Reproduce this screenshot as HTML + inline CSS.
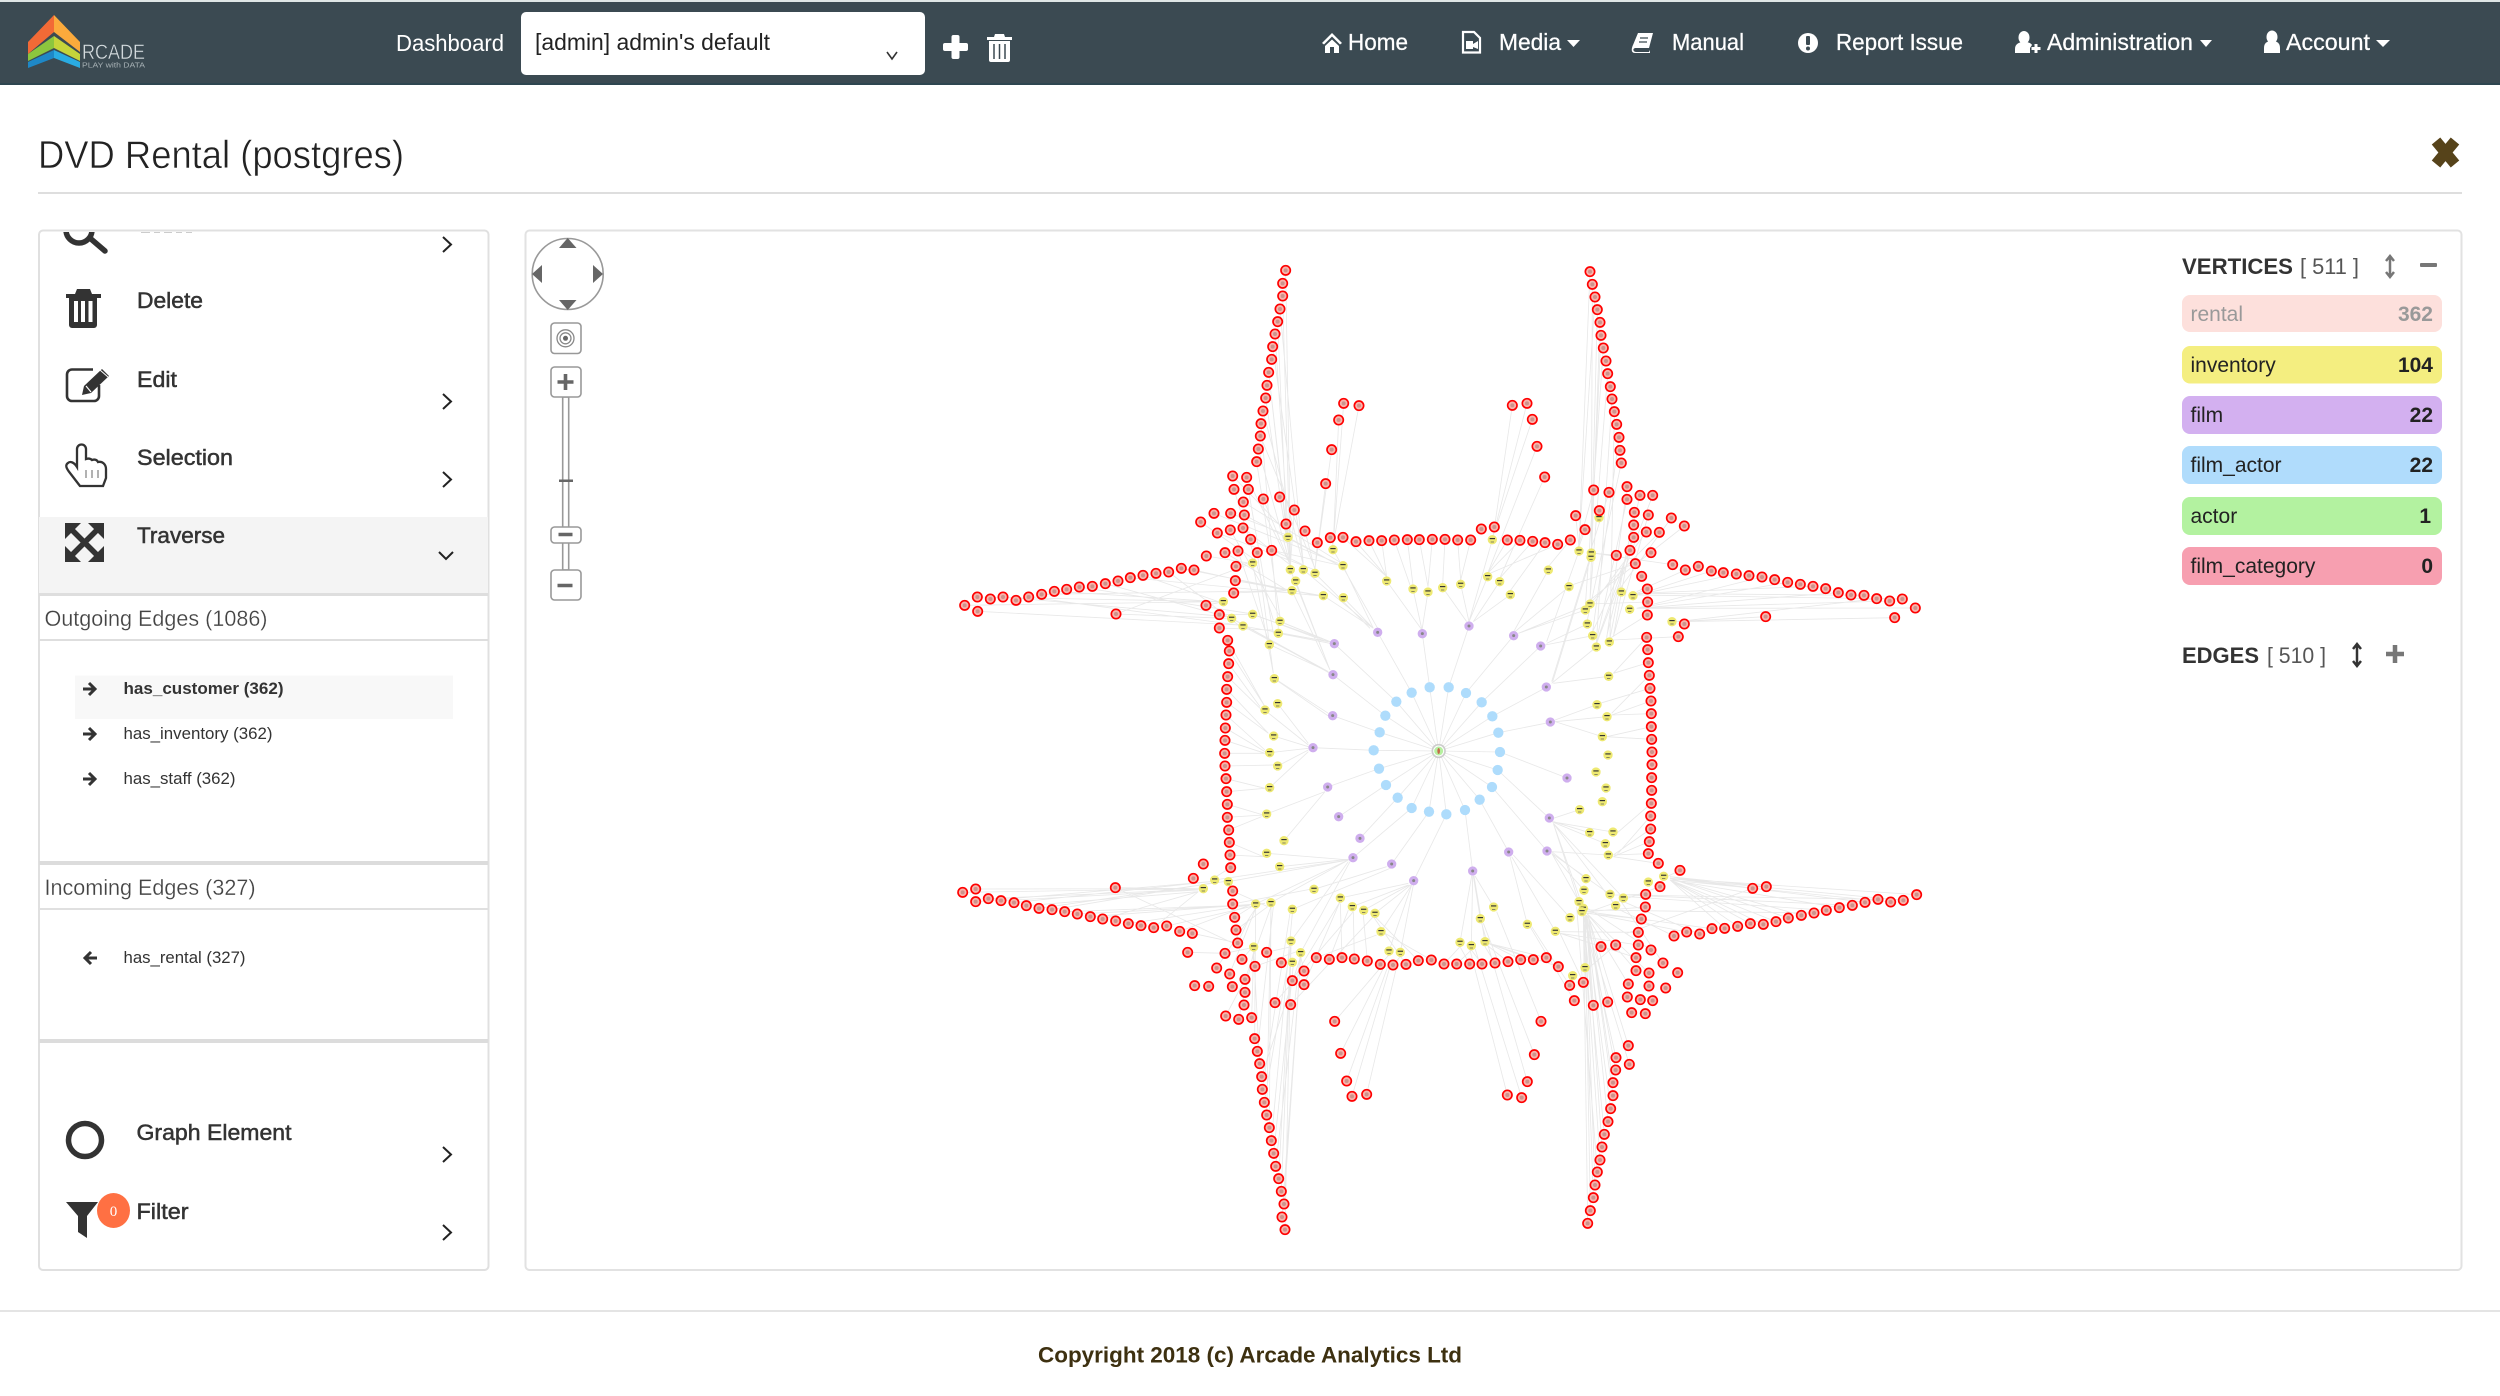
<!DOCTYPE html>
<html lang="en"><head><meta charset="utf-8"><title>DVD Rental (postgres)</title>
<style>
html,body{margin:0;padding:0;background:#fff}
svg{display:block}
text{font-family:"Liberation Sans",sans-serif}
.n{fill:none;stroke:none}
.R{marker-start:url(#R);marker-mid:url(#R);marker-end:url(#R)}
.Y{marker-start:url(#Y);marker-mid:url(#Y);marker-end:url(#Y)}
.P{marker-start:url(#P);marker-mid:url(#P);marker-end:url(#P)}
.B{marker-start:url(#B);marker-mid:url(#B);marker-end:url(#B)}
.e{fill:none;stroke:#e8e8e8;stroke-width:2.5}
.m{fill:#333;stroke:#333;stroke-width:.5;font-size:22px}
.w{fill:#fff;font-size:23px}
.s{fill:#333;font-size:17px}
.l{fill:#222;font-size:21px}
.c{fill:none;stroke:#222;stroke-width:2}
</style></head>
<body>
<svg xmlns="http://www.w3.org/2000/svg" width="2500" height="1396" viewBox="0 0 2500 1396">
<defs>
<marker id="R" markerUnits="userSpaceOnUse" markerWidth="60" markerHeight="60" refX="0" refY="0" viewBox="-30 -30 60 60"><circle r="14" fill="#f7b4ac" stroke="#f00" stroke-width="5"/><circle r="6" fill="#a5706a" opacity=".5"/></marker>
<marker id="Y" markerUnits="userSpaceOnUse" markerWidth="60" markerHeight="60" refX="0" refY="0" viewBox="-30 -30 60 60"><circle r="14" fill="#eee972"/><rect x="-8" y="-5" width="16" height="3.500" fill="#333"/><rect x="-5" y="6" width="10" height="2" fill="#555"/></marker>
<marker id="P" markerUnits="userSpaceOnUse" markerWidth="60" markerHeight="60" refX="0" refY="0" viewBox="-30 -30 60 60"><circle r="14" fill="#cfaeee"/><circle r="4.5" fill="#888"/></marker>
<marker id="B" markerUnits="userSpaceOnUse" markerWidth="60" markerHeight="60" refX="0" refY="0" viewBox="-30 -30 60 60"><circle r="15.5" fill="#aedcfc"/></marker>
<clipPath id="pc"><rect x="39" y="232" width="449" height="1037"/></clipPath>
</defs>

<!-- navbar -->
<rect x="0" y="0" width="2500" height="3" fill="#dfe6e6"/>
<rect x="0" y="2" width="2500" height="82" fill="#3b4a52"/>
<rect x="0" y="83" width="2500" height="2" fill="#2e4650"/>
<polygon points="54,15 28,42 28,54 54,32" fill="#f26a36"/>
<polygon points="54,15 80,42 80,52 54,32" fill="#fbaa3c"/>
<polygon points="54,36 28,54 28,61 54,48" fill="#8cc63e"/>
<polygon points="54,36 80,54 80,61 54,48" fill="#c6d43a"/>
<polygon points="54,50 28,62 28,68 54,58" fill="#1e88c7"/>
<polygon points="54,50 80,62 80,68 54,58" fill="#2aace2"/>
<text x="82" y="59" font-size="21" fill="#d5dcdf" stroke="#3b4a52" stroke-width=".4" textLength="63" lengthAdjust="spacingAndGlyphs">RCADE</text>
<text x="82" y="67.500" font-size="7" fill="#a8b2b6" textLength="63" lengthAdjust="spacingAndGlyphs">PLAY with DATA</text>
<text class="w" x="396" y="51" textLength="108" lengthAdjust="spacingAndGlyphs">Dashboard</text>
<rect x="521" y="12" width="404" height="63" rx="5" fill="#fff"/>
<text x="535" y="50" font-size="23" fill="#222" textLength="235" lengthAdjust="spacingAndGlyphs">[admin] admin's default</text>
<path d="M887 52L892 59L897 52" fill="none" stroke="#333" stroke-width="1.6"/>
<rect x="951.500" y="35" width="8" height="24" rx="2" fill="#fff"/><rect x="943" y="43" width="25" height="8" rx="2" fill="#fff"/>
<path d="M987 37h25v3h-25zM994 37l1-3h9l1 3zM989 41h21v19a2 2 0 0 1-2 2h-17a2 2 0 0 1-2-2z" fill="#fff"/>
<path d="M994 44v15M999.500 44v15M1005 44v15" stroke="#3b4a52" stroke-width="1.500"/>

<path d="M1332 33L1322 43l2 1.500 8-8 8 8 2-1.500zM1325 46l7-6.500 7 6.500v7h-5v-6h-4v6h-5z" fill="#fff"/>
<text class="w" x="1348" y="50" stroke="#fff" stroke-width=".25" textLength="60" lengthAdjust="spacingAndGlyphs">Home</text>
<path d="M1463 32H1474L1480 38V52.500H1463Z" fill="none" stroke="#fff" stroke-width="2.200"/>
<rect x="1466" y="41" width="7" height="8" fill="#fff"/><polygon points="1473,44 1478,41 1478,49 1473,47" fill="#fff"/>
<text class="w" x="1499" y="50" stroke="#fff" stroke-width=".25" textLength="62" lengthAdjust="spacingAndGlyphs">Media</text>
<polygon points="1567,40 1580,40 1573.500,47" fill="#fff"/>
<path d="M1638 33H1653L1649 48H1636C1632 48 1633 52 1636 52H1649L1650 50V53H1635C1630 53 1632 47 1633 45Z" fill="#fff"/>
<path d="M1640 38h8M1639 42h8" stroke="#3b4a52" stroke-width="1.300"/>
<text class="w" x="1672" y="50" stroke="#fff" stroke-width=".25" textLength="72" lengthAdjust="spacingAndGlyphs">Manual</text>
<circle cx="1808" cy="43" r="10" fill="#fff"/><rect x="1806" y="36" width="4" height="9" rx="1" fill="#3b4a52"/><circle cx="1808" cy="48.500" r="2" fill="#3b4a52"/>
<text class="w" x="1836" y="50" stroke="#fff" stroke-width=".25" textLength="127" lengthAdjust="spacingAndGlyphs">Report Issue</text>
<ellipse cx="2024" cy="37.500" rx="5.500" ry="6.500" fill="#fff"/><path d="M2015 53v-4c0-5 4-7 9-7 4 0 7 1 8 3l-2 3v5z" fill="#fff"/><path d="M2036 44v9M2031.500 48.500h9" stroke="#fff" stroke-width="3"/>
<text class="w" x="2047" y="50" stroke="#fff" stroke-width=".25" textLength="146" lengthAdjust="spacingAndGlyphs">Administration</text>
<polygon points="2200,40 2212,40 2206,47" fill="#fff"/>
<ellipse cx="2272" cy="37" rx="5.500" ry="6.500" fill="#fff"/><path d="M2264 53v-5c0-5 3-7 8-7s8 2 8 7v5z" fill="#fff"/>
<text class="w" x="2286" y="50" stroke="#fff" stroke-width=".25" textLength="84" lengthAdjust="spacingAndGlyphs">Account</text>
<polygon points="2376,40 2390,40 2383,47" fill="#fff"/>

<!-- header -->
<text x="38" y="168" font-size="39" fill="#222" stroke="#fff" stroke-width=".55" textLength="366" lengthAdjust="spacingAndGlyphs">DVD Rental (postgres)</text>
<rect x="38" y="192" width="2424" height="2" fill="#dedede"/>
<path d="M2436 141L2455 164M2455 141L2436 164" stroke="#56431a" stroke-width="11"/>

<!-- left panel -->
<rect x="39" y="230.500" width="449.500" height="1039.500" rx="4" fill="#fff" stroke="#e0e0e0" stroke-width="2"/>
<g clip-path="url(#pc)">
<circle cx="79" cy="230" r="13" fill="none" stroke="#333" stroke-width="5.500"/>
<path d="M91 239L105 251" stroke="#333" stroke-width="5.500" stroke-linecap="round"/>
<path d="M141 232h9M154 232h6M164 232h8M176 232h6M186 232h6" stroke="#ccc" stroke-width="2"/>
<rect x="39" y="517" width="449" height="76" fill="#f4f4f4"/>
</g>
<path class="c" d="M443 237L451 244.500L443 252"/>
<path d="M66 294h35v4h-35zM75 294l2-5h13l2 5zM69 296h28v29a3 3 0 0 1-3 3h-22a3 3 0 0 1-3-3z" fill="#333"/>
<path d="M76 301v21M83 301v21M90.500 301v21" stroke="#fff" stroke-width="4"/>
<text class="m" x="137" y="308" textLength="66" lengthAdjust="spacingAndGlyphs">Delete</text>
<path d="M93 369.500H72a5 5 0 0 0-5 5V396a5 5 0 0 0 5 5H94a5 5 0 0 0 5-5V385" fill="none" stroke="#333" stroke-width="2.600"/>
<polygon points="82,395 84,386 102,369 109,376 91,393" fill="#333"/><path d="M86 386l5 6" stroke="#fff" stroke-width="1.200"/><path d="M100 370l8 7" stroke="#fff" stroke-width="1"/>
<text class="m" x="137" y="387" textLength="40" lengthAdjust="spacingAndGlyphs">Edit</text>
<path class="c" d="M443 394L451 401.500L443 409"/>
<path d="M80 486L70 473C66 468 65 465 68 463C70 461 74 462 77 467V449a4.500 4.500 0 0 1 9 0V459C89 458 91 459 92 460C95 459 97 460 98 462C102 461 106 464 106 469V478L103 486Z" fill="none" stroke="#333" stroke-width="2.300"/>
<path d="M86 470v8M92 470v8M98 470v8" stroke="#888" stroke-width="1.300"/>
<text class="m" x="137" y="465" textLength="96" lengthAdjust="spacingAndGlyphs">Selection</text>
<path class="c" d="M443 472L451 479.500L443 487"/>
<path d="M72 530L97 555M97 530L72 555" stroke="#333" stroke-width="5.500"/>
<path d="M65 523H81L65 539ZM104 523H88L104 539ZM65 562H81L65 546ZM104 562H88L104 546Z" fill="#333"/>
<text class="m" x="137" y="543" textLength="88" lengthAdjust="spacingAndGlyphs">Traverse</text>
<path class="c" d="M439 552L446 559L453 552"/>
<rect x="39" y="593" width="449" height="3" fill="#dedede"/>
<text x="44.500" y="626" font-size="22" fill="#444" stroke="#fff" stroke-width=".25" textLength="223" lengthAdjust="spacingAndGlyphs">Outgoing Edges (1086)</text>
<rect x="39" y="639" width="449" height="2" fill="#dedede"/>
<rect x="75" y="675.500" width="378" height="43.500" fill="#f8f8f8"/>
<path d="M83 689h11M89 683l6 6-6 6M83 734h11M89 728l6 6-6 6M83 779h11M89 773l6 6-6 6" fill="none" stroke="#333" stroke-width="3"/>
<text class="s" x="123.500" y="694" font-weight="bold" textLength="160" lengthAdjust="spacingAndGlyphs">has_customer (362)</text>
<text class="s" x="123.500" y="739" textLength="149" lengthAdjust="spacingAndGlyphs">has_inventory (362)</text>
<text class="s" x="123.500" y="784" textLength="112" lengthAdjust="spacingAndGlyphs">has_staff (362)</text>
<rect x="39" y="861" width="449" height="4" fill="#dcdcdc"/>
<text x="44.500" y="895" font-size="22" fill="#444" stroke="#fff" stroke-width=".25" textLength="211" lengthAdjust="spacingAndGlyphs">Incoming Edges (327)</text>
<rect x="39" y="908" width="449" height="2" fill="#e0e0e0"/>
<path d="M97 958H85M91 952l-6 6 6 6" fill="none" stroke="#333" stroke-width="3"/>
<text class="s" x="123.500" y="963" textLength="122" lengthAdjust="spacingAndGlyphs">has_rental (327)</text>
<rect x="39" y="1039" width="449" height="4" fill="#dcdcdc"/>
<circle cx="85" cy="1140" r="16.500" fill="none" stroke="#333" stroke-width="5.500"/>
<text class="m" x="136.500" y="1140" textLength="155" lengthAdjust="spacingAndGlyphs">Graph Element</text>
<path class="c" d="M443 1147L451 1154.500L443 1162"/>
<polygon points="66,1202 98,1202 87,1216 87,1238 78,1232 78,1216" fill="#333"/>
<ellipse cx="113.500" cy="1210.500" rx="16.500" ry="17.500" fill="#ff7043"/>
<text x="113.500" y="1216" font-size="15" fill="#fff" text-anchor="middle" style="font-family:'Liberation Serif',serif">0</text>
<text class="m" x="136.500" y="1219" textLength="52" lengthAdjust="spacingAndGlyphs">Filter</text>
<path class="c" d="M443 1225L451 1232.500L443 1240"/>

<!-- graph panel -->
<rect x="525.500" y="230.500" width="1936" height="1039.500" rx="4" fill="#fff" stroke="#e2e2e2" stroke-width="2"/>
<circle cx="567.700" cy="274" r="35.500" fill="#fff" stroke="#999" stroke-width="1.600"/>
<g fill="#666"><polygon points="567.700,238 559,248 576.500,248"/><polygon points="567.700,310 559,300 576.500,300"/><polygon points="532,274 542,265 542,283"/><polygon points="603,274 593,265 593,283"/></g>
<g fill="#fff" stroke="#999" stroke-width="1.600">
<rect x="562.700" y="397" width="6" height="173"/>
<rect x="551" y="323" width="30" height="30.500" rx="3.500"/>
<rect x="551" y="367" width="30" height="30" rx="3.500"/>
<rect x="551" y="527" width="30" height="16" rx="3.500"/>
<rect x="551" y="570" width="30" height="30" rx="3.500"/>
</g>
<rect x="559" y="479.500" width="14" height="2.500" fill="#666"/>
<circle cx="565.500" cy="338.300" r="8.500" fill="none" stroke="#888" stroke-width="1.300"/><circle cx="565.500" cy="338.300" r="5.500" fill="none" stroke="#888" stroke-width="1.300"/><circle cx="565.500" cy="338.300" r="2.500" fill="#666"/>
<path d="M557.500 382h16M565.500 374v16M558.500 534.500h14M557.500 585.500h15" stroke="#666" stroke-width="3.600"/>

<!-- edges -->
<g transform="translate(940 240) scale(.33333)"><path class="e" d="M1037 91L1052 975M1013 245L1040 880M1005 282L1051 975M998 320L1090 975M986 397L1041 880M977 474L1051 975M969 513L1090 975M961 588L1125 985M955 627L1051 975M950 665L1020 1130M963 551L1015 1165M986 397L1050 975M1028 168L1051 975M1020 207L1090 975M74 1096L835 1085M113 1071L835 1085M189 1071L860 1130M266 1071L895 1155M343 1054L835 1085M418 1041L925 1120M496 1031L860 1130M609 1006L835 1085M686 996L895 1155M762 990L1040 1052M724 985L1135 1067M528 1122L938 969M528 1122L860 1135M113 1114L895 1155M305 1063L1040 1052M571 1013L1135 1067M1211 490L1180 910M1257 497L1180 910M1196 540L1180 910M1175 629L1125 985M1157 731L1125 985M1325 902L1340 1010M1363 900L1410 1035M1402 899L1419 1035M1438 899L1464 1040M1477 898L1464 1040M1287 902L1340 1010M1248 905L1340 1010M1179 929L1313 1165M1209 977L1300 1165M1340 1023L1446 1170M1419 1047L1446 1170M1464 1056L1446 1170M1150 1067L1300 1165M1210 1073L1300 1165M1056 1052L1170 1290M1020 1144L1170 1205M1015 1180L1170 1210M1003 1316L1165 1428M1051 989L1170 1290M1090 989L1300 1165M1125 1000L1290 1165M1067 1023L1170 1290M1044 892L1195 975M878 708L1044 880M920 712L1051 975M882 748L1000 1140M925 748L1000 1180M910 786L1205 970M970 777L1051 975M1019 771L1040 880M1063 810L1051 975M822 820L1195 970M872 820L1040 885M913 825L1195 975M782 846L938 955M1038 852L1044 880M832 879L1125 990M871 870L1020 1130M909 864L1051 975M1095 873L1125 990M932 898L1090 975M1132 908L1125 990M1171 893L1179 915M1209 892L1340 1010M799 948L925 969M855 938L1040 1050M894 933L985 1200M952 938L1000 1300M995 931L1195 975M888 979L925 969M886 1022L1135 1065M881 1059L1040 1052M798 1096L850 1085M838 1124L925 1123M838 1164L1000 1170M938 969L1000 1300M938 1123L1160 1205M875 1135L1170 1300M909 1158L1165 1205"/></g>
<g transform="translate(1440 240) scale(.33333)"><path class="e" d="M450 95L417 920M472 209L454 925M483 286L453 940M503 401L450 1080M523 515L510 1195M537 592L458 1175M544 669L442 1140M490 324L436 1098M516 477L469 1210M457 133L454 925M465 171L417 920M480 247L450 1080M217 496L160 885M261 490L160 885M277 538L160 885M291 619L143 1000M314 711L179 1015M15 898L8 1033M53 900L62 1020M92 900L62 1020M202 900L143 1000M240 901L143 1000M278 904L179 1015M315 908L211 1052M353 913L150 1000M391 900L325 980M435 869L417 920M407 827L417 920M529 946L465 940M698 974L465 940M586 971L395 1035M583 817L510 1195M581 855L520 1190M581 892L470 1205M570 931L458 1175M561 778L470 1200M561 740L500 1195M461 750L415 920M507 757L454 925M600 766L500 1190M638 766L470 1210M625 825L520 1190M619 876L460 1090M658 877L440 1100M694 834L540 1045M733 858L450 1080M736 990L590 1055M814 993L590 1065M889 1002L590 1065M966 1011L590 1105M1043 1027L590 1105M1119 1039L590 1060M1195 1058L590 1105M1272 1066L600 1060M1349 1083L590 1105M1426 1104L590 1105M1387 1077L590 1065M977 1130L710 1145M1364 1133L710 1145M1310 1076L710 1145M622 1047L590 1060M623 1086L450 1092M622 1125L510 1195M715 1190L520 1200M620 1192L520 1300M625 1268L520 1300M628 1306L515 1420M630 1345L480 1390M633 1383L515 1425M634 1421L515 1425M634 1460L500 1490M635 1498L500 1490M157 899L87 1145M143 1010L87 1145M179 1025L100 1145M62 1033L87 1145M8 1043L80 1145M211 1064L100 1145M325 990L221 1175M387 1040L225 1175M436 1110L235 1180M450 1092L235 1180M442 1152L320 1210M458 1187L315 1215M469 1221L335 1330M506 1309L340 1330M471 1394L345 1440M501 1430L345 1445M487 1490L345 1445M417 933L320 1205M454 939L335 1325M453 952L338 1325"/></g>
<g transform="translate(940 850) scale(.33333)"><path class="e" d="M68 127L775 116M107 117L775 116M107 155L810 95M183 152L775 120M259 167L775 125M336 179L810 100M412 192L930 165M488 207L775 125M565 221L930 165M641 233L775 125M680 228L975 160M719 244L930 165M757 250L875 275M526 113L775 116M526 113L880 280M145 146L775 118M222 158L810 95M297 175L850 95M374 185L930 165M451 200L975 160M1035 1139L1053 285M1026 1101L1082 320M1016 986L1053 285M1007 949L1080 320M994 872L1057 190M980 795L993 170M973 757L1053 285M959 641L941 305M944 566L947 175M965 680L1082 320M1001 910L1060 345M988 833L993 170M1024 1024L1053 285M1032 1062L1082 320M952 604L1000 170M967 718L1050 190M857 498L915 388M935 503L941 305M896 508L941 305M743 307L855 310M855 310L927 295M906 328L930 300M980 307L1053 290M1024 338L1057 337M945 349L1070 305M1092 363L1082 320M1092 404L1200 155M1057 392L1200 155M1005 458L1240 185M1052 464L1300 200M830 354L947 175M869 372L947 175M915 388L993 170M893 279L930 200M884 202L935 170M888 240L983 170M878 123L983 170M878 162L1110 118M1129 323L1310 255M1168 328L1225 180M1206 323L1201 160M1243 327L1240 185M1282 333L1270 195M1321 343L1347 315M1359 345L1381 320M1398 343L1300 200M1435 332L1305 200M1474 330L1335 250M1184 514L1320 355M1202 610L1335 345M1220 693L1345 345M1236 739L1350 350M1280 733L1370 350M947 162L1225 30M993 158L1225 30M1019 50L1225 28M1122 118L1340 50M1201 144L1405 100M1237 170L1405 105M1271 181L1408 105M1305 190L1412 105M1323 245L1415 105M1053 273L1225 35M1082 308L1230 35M1347 303L1415 105M1381 307L1420 105M1057 178L1350 55M980 10L1230 30"/></g>
<g transform="translate(1440 800) scale(.33333)"><path class="e" d="M443 1270L430 345M451 1232L435 345M460 1193L430 345M465 1155L435 345M472 1116L410 320M480 1080L430 345M486 1041L438 345M493 1003L430 345M504 965L440 345M512 926L435 345M519 887L445 350M519 848L445 350M527 810L440 345M528 773L430 345M565 737L445 350M568 793L430 345M460 616L440 345M503 606L445 345M702 408L540 330M740 396L450 340M779 402L550 305M816 386L440 335M854 385L690 240M893 379L690 240M931 371L690 240M970 373L690 240M1008 365L690 240M1045 354L690 235M1084 346L690 235M1122 339L440 330M1159 331L565 290M1198 323L690 240M1237 316L565 285M1275 307L690 235M1314 298L565 285M1352 306L690 240M1390 301L690 235M1430 284L690 235M938 265L690 230M979 260L690 230M938 265L560 400M12 492L60 440M50 492L94 450M89 492L60 440M126 492L94 450M165 489L135 440M204 485L140 435M242 479L145 430M280 479L145 430M319 473L145 430M355 500L145 430M389 556L275 380M430 547L360 400M403 602L270 380M303 664L170 335M283 764L130 370M262 845L125 370M202 885L90 450M245 893L105 445M121 356L100 228M161 321L105 228M60 427L95 228M94 437L98 228M135 425L102 228M262 373L210 170M346 394L215 170M390 353L220 165M432 271L335 160M438 236L335 155M417 305L335 160M426 335L340 70M430 325L340 70M510 283L335 160M550 294L340 70M527 317L340 70M449 98L340 65M519 96L335 65M496 131L335 65M505 165L335 155M419 29L340 55M634 10L530 100M632 48L530 165M632 87L520 165M628 125L520 170M625 161L520 165M655 190L520 170M720 211L685 228M660 260L450 335M617 283L525 285M616 321L440 335M604 357L440 340M595 397L355 395M595 435L360 400M588 473L360 400M588 512L440 340M483 440L360 400M527 435L445 505M565 552L440 345M627 519L440 340M633 450L420 310M669 489L540 300"/></g>
<g transform="translate(1200 600) scale(.33333)"><path class="e" d="M716 453L521 451M716 453L537 506M716 453L558 555M716 453L593 593M716 453L635 624M716 453L687 635M716 453L739 643M716 453L795 630M716 453L839 599M716 453L876 561M716 453L893 510M716 453L900 456M716 453L895 398M716 453L877 349M716 453L845 307M716 453L798 279M716 453L746 262M716 453L689 262M716 453L635 278M716 453L589 305M716 453L556 347M716 453L539 397M533 97L635 278M667 101L689 262M807 78L746 262M403 131L589 305M399 224L556 347M398 347L539 397M339 443L521 451M383 561L537 506M416 650L558 555M480 715L593 593M459 773L635 624M575 792L687 635M641 842L739 643M818 813L795 630M941 107L798 279M1022 138L845 307M1039 262L877 349M1051 367L895 398M1101 534L900 456M1047 654L893 510M1041 753L876 561M926 756L839 599M209 458L325 445M233 498L325 450M209 563L325 455M200 642L375 575M252 722L375 575M85 845L445 780M43 840L445 780M221 408L325 440M195 331L325 435M233 311L325 430M223 235L385 340M158 43L390 125M240 65L390 125M234 99L390 125M207 133L385 215M95 55L385 215M128 78L385 215M83 121L195 320M86 191L180 320M83 230L180 325M80 268L205 400M80 307L205 400M78 345L195 450M76 384L195 455M75 421L195 460M74 460L195 460M75 498L220 495M78 536L195 565M80 575L195 565M82 613L190 645M82 652L190 645M86 690L185 650M88 727L190 770M90 765L190 770M92 803L40 835M88 153L195 320"/></g>

<!-- actor -->
<g transform="translate(1200 600) scale(.33333)"><circle cx="716" cy="453" r="19" fill="#fff" stroke="#ccc" stroke-width="5"/><circle cx="716" cy="453" r="13.500" fill="#b6f0a0"/><ellipse cx="716" cy="453" rx="4" ry="9" fill="#c46a4a"/></g>

<!-- non-red nodes -->
<g transform="translate(940 240) scale(.33333)">
<path class="n Y" d="M1044 892 1179 929 938 969 1209 977 1051 989 1090 989 1125 1000 1067 1023 1340 1023 1056 1052 1419 1047 1464 1056 1150 1067 1210 1073 850 1085 938 1123 875 1135 909 1158 1020 1144 1015 1180 988 1214 1003 1316 1013 1391 975 1410 1001 1488"/>
</g>
<g transform="translate(1200 600) scale(.33333)">
<path class="n Y" d="M209 458 233 498 209 563 200 642 252 722"/>
<path class="n P" d="M533 97 667 101 807 78 403 131 399 224 398 347 339 443 383 561 416 650 480 715 459 773 575 792 641 842 818 813"/>
<path class="n B" d="M521 451 537 506 558 555 593 593 635 624 687 635 739 643 795 630 839 599 876 561 893 510 900 456 895 398 877 349 845 307 798 279 746 262 689 262 635 278 589 305 556 347 539 397"/>
</g>
<g transform="translate(940 850) scale(.33333)">
<path class="n Y" d="M980 10 1019 50 824 90 865 95 790 116 1122 118 1201 144 947 162 993 158 1057 178 1237 170 1271 181 1305 190 1323 245 1053 273 941 291 1082 308 1057 337 1347 303 1381 307"/>
</g>
<g transform="translate(1440 240) scale(.33333)">
<path class="n Y" d="M477 833 157 899 417 933 454 939 453 952 143 1010 179 1025 325 990 62 1033 8 1043 387 1040 211 1064 544 1056 579 1067 450 1092 436 1110 569 1108 696 1145 442 1152 458 1187 508 1206 469 1221 506 1309 471 1394 501 1430 487 1490"/>
<path class="n P" d="M221 1187 302 1218 319 1341 331 1446"/>
</g>
<g transform="translate(1440 800) scale(.33333)">
<path class="n Y" d="M504 -135 468 -84 498 -36 487 5 419 29 449 98 519 96 496 131 505 165 625 246 671 229 438 236 432 271 417 305 430 325 426 335 510 283 550 294 527 317 390 353 262 373 346 394 435 503 398 527 161 321 121 356 60 427 94 437 135 425"/>
<path class="n P" d="M381 -66 328 54 206 156 321 153"/>
</g>

<!-- red nodes -->
<g transform="translate(940 240) scale(.33333)">
<path class="n R" d="M1037 91 1028 130 1028 168 1020 207 1013 245 1005 282 998 320 995 358 986 397 981 436 977 474 969 513 963 551 961 588 955 627 950 665"/>
<path class="n R" d="M878 708 920 712 882 748 925 748 910 786 970 777 1019 771 1063 810 822 820 872 820 913 825 782 846 1038 852 832 879 871 870 909 864 1095 873 932 898 1132 908 1171 893 1209 892 1248 905 1287 902 1325 902 1363 900 1402 899 1438 899 1477 898"/>
<path class="n R" d="M799 948 855 938 894 933 952 938 995 931 888 979 886 1022 881 1059 798 1096 838 1124 838 1164"/>
<path class="n R" d="M762 990 724 985 686 996 648 1000 609 1006 571 1013 534 1023 496 1031 457 1039 418 1041 380 1048 343 1054 305 1063 266 1071 228 1081 189 1071 151 1077 112 1071 74 1096 113 1114 528 1122"/>
<path class="n R" d="M1211 490 1257 497 1196 540 1175 629 1157 731"/>
</g>
<g transform="translate(1200 600) scale(.33333)">
<path class="n R" d="M83 121 88 153 86 191 83 230 80 268 80 307 78 345 76 384 75 421 74 460 75 498 78 536 80 575 82 613 82 652 86 690 88 727 90 765 92 803"/>
</g>
<g transform="translate(940 850) scale(.33333)">
<path class="n R" d="M790 42 760 85 878 123 878 162 884 202 888 240 893 279"/>
<path class="n R" d="M68 127 107 117 107 155 145 146 183 152 222 158 259 167 297 175 336 179 374 185 412 192 451 200 488 207 527 213 565 221 603 227 641 233 680 228 719 244 757 250 526 113"/>
<path class="n R" d="M743 307 855 310 906 328 980 307 945 349 830 354 869 372 915 388 1024 338 1092 363 1057 392 1092 404 764 407 806 409 877 410 915 427 912 465 1005 458 1052 464 857 498 896 508 935 503"/>
<path class="n R" d="M1129 323 1168 328 1206 323 1243 327 1282 333 1321 343 1359 345 1398 343 1435 332 1474 330"/>
<path class="n R" d="M944 566 952 604 959 641 965 680 967 718 973 757 980 795 988 833 994 872 1001 910 1007 949 1016 986 1024 1024 1032 1062 1026 1101 1035 1139"/>
<path class="n R" d="M1184 514 1202 610 1220 693 1236 739 1280 733"/>
</g>
<g transform="translate(1440 240) scale(.33333)">
<path class="n R" d="M450 95 457 133 465 171 472 209 480 247 483 286 490 324 498 363 503 401 511 440 516 477 523 515 530 553 537 592 540 631 544 669"/>
<path class="n R" d="M217 496 261 490 277 538 291 619 314 711"/>
<path class="n R" d="M461 750 507 757 561 740 561 778 600 766 638 766 478 812 407 827 583 817 625 825 694 834 733 858 435 869 581 855 619 876 658 877 581 892 124 867 163 861 391 900 353 913 315 908 278 904 240 901 202 900 92 900 53 900 15 898"/>
<path class="n R" d="M529 946 570 931 633 938 586 971 605 1009 622 1047 623 1086 622 1125 733 1152 715 1190 698 974"/>
<path class="n R" d="M736 990 775 979 814 993 850 998 889 1002 927 1007 966 1011 1004 1019 1043 1027 1081 1033 1119 1039 1157 1046 1195 1058 1233 1065 1272 1066 1310 1076 1349 1083 1387 1077 1426 1104 1364 1133 977 1130"/>
<path class="n R" d="M620 1192 623 1229 625 1268 628 1306 630 1345 633 1383 634 1421 634 1460 635 1498"/>
</g>
<g transform="translate(1440 800) scale(.33333)">
<path class="n R" d="M636 -144 636 -106 635 -67 635 -29 634 10 632 48 632 87 628 125 625 161"/>
<path class="n R" d="M655 190 720 211 660 260 617 283 616 321 604 357 595 397 595 435 588 473 588 512 633 450 669 489 713 518 627 519 627 558 677 564 565 552 562 591 601 599 638 602 575 638 616 641 483 440 527 435"/>
<path class="n R" d="M12 492 50 492 89 492 126 492 165 489 204 485 242 479 280 479 319 473 355 500 389 556 430 547 403 602 460 616 503 606"/>
<path class="n R" d="M303 664 283 764 262 845 202 885 245 893"/>
<path class="n R" d="M565 737 528 773 568 793 527 810 519 848 519 887 512 926 504 965 493 1003 486 1041 480 1080 472 1116 465 1155 460 1193 451 1232 443 1270"/>
<path class="n R" d="M702 408 740 396 779 402 816 386 854 385 893 379 931 371 970 373 1008 365 1045 354 1084 346 1122 339 1159 331 1198 323 1237 316 1275 307 1314 298 1352 306 1390 301 1430 284 938 265 979 260"/>
</g>

<!-- legend -->
<text x="2182" y="274" font-size="22" font-weight="bold" fill="#333" textLength="111" lengthAdjust="spacingAndGlyphs">VERTICES</text>
<text x="2300" y="274" font-size="22" fill="#555" textLength="59" lengthAdjust="spacingAndGlyphs">[ 511 ]</text>
<path d="M2390 258V275M2386 261L2390 256L2394 261M2386 272L2390 277L2394 272" fill="none" stroke="#777" stroke-width="2.500"/>
<rect x="2420" y="263" width="17" height="4" rx="1" fill="#777"/>
<rect x="2182" y="295" width="260" height="37" rx="8" fill="#fde0dc"/>
<rect x="2182" y="346" width="260" height="37.500" rx="8" fill="#f4ee80"/>
<rect x="2182" y="396" width="260" height="38" rx="8" fill="#d3b0f0"/>
<rect x="2182" y="446" width="260" height="38" rx="8" fill="#b0dcfc"/>
<rect x="2182" y="497" width="260" height="38" rx="8" fill="#b3f2a0"/>
<rect x="2182" y="547" width="260" height="38" rx="8" fill="#f79fb0"/>
<text class="l" x="2190.500" y="321" style="fill:#999">rental</text>
<text class="l" x="2433" y="321" text-anchor="end" font-weight="bold" style="fill:#999">362</text>
<text class="l" x="2190.500" y="372">inventory</text>
<text class="l" x="2433" y="372" text-anchor="end" font-weight="bold">104</text>
<text class="l" x="2190.500" y="422">film</text>
<text class="l" x="2433" y="422" text-anchor="end" font-weight="bold">22</text>
<text class="l" x="2190.500" y="472">film_actor</text>
<text class="l" x="2433" y="472" text-anchor="end" font-weight="bold">22</text>
<text class="l" x="2190.500" y="523">actor</text>
<text class="l" x="2431" y="523" text-anchor="end" font-weight="bold">1</text>
<text class="l" x="2190.500" y="573">film_category</text>
<text class="l" x="2433" y="573" text-anchor="end" font-weight="bold">0</text>
<text x="2182" y="663" font-size="22" font-weight="bold" fill="#333" textLength="77" lengthAdjust="spacingAndGlyphs">EDGES</text>
<text x="2267" y="663" font-size="22" fill="#555" textLength="59" lengthAdjust="spacingAndGlyphs">[ 510 ]</text>
<path d="M2357 646V664M2353 649L2357 644L2361 649M2353 661L2357 666L2361 661" fill="none" stroke="#333" stroke-width="2.500"/>
<path d="M2386 654h18M2395 645v18" stroke="#777" stroke-width="4.500"/>

<!-- footer -->
<rect x="0" y="1310" width="2500" height="2" fill="#e4e4e4"/>
<text x="1038" y="1362.500" font-size="22.400" font-weight="bold" fill="#3d3010" textLength="424" lengthAdjust="spacingAndGlyphs">Copyright 2018 (c) Arcade Analytics Ltd</text>
</svg>
</body></html>
